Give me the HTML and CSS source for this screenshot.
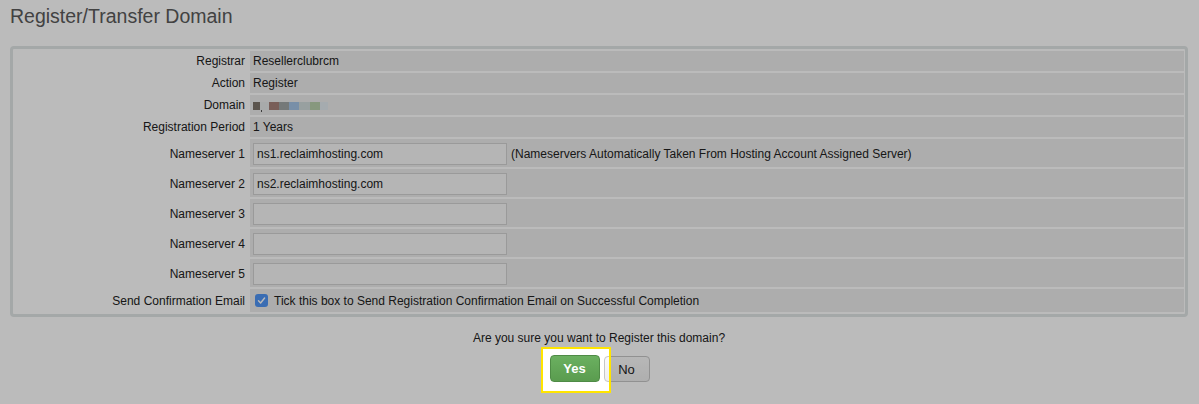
FILE: index.html
```html
<!DOCTYPE html>
<html lang="en">
<head>
<meta charset="utf-8">
<title>Register/Transfer Domain</title>
<link rel="stylesheet" href="styles.css">
</head>
<body>
<div class="page">
  <h1 class="title">Register/Transfer Domain</h1>
  <div class="box">
    <div class="grid">
      <div class="label row-text">Registrar</div>
      <div class="value row-text">Resellerclubrcm</div>

      <div class="label row-text">Action</div>
      <div class="value row-text">Register</div>

      <div class="label row-text">Domain</div>
      <div class="value row-text">
        <span class="blur">
          <span class="px b1"></span><span class="px b2"><span class="dot"></span></span><span class="px b3"></span><span class="px b4"></span><span class="px b5"></span><span class="px b6"></span><span class="px b7"></span><span class="px b8"></span>
        </span>
      </div>

      <div class="label row-text">Registration Period</div>
      <div class="value row-text">1 Years</div>

      <div class="label row-ns">Nameserver 1</div>
      <div class="value row-ns"><input class="field" type="text" value="ns1.reclaimhosting.com"><span class="note">(Nameservers Automatically Taken From Hosting Account Assigned Server)</span></div>

      <div class="label row-ns">Nameserver 2</div>
      <div class="value row-ns"><input class="field" type="text" value="ns2.reclaimhosting.com"></div>

      <div class="label row-ns">Nameserver 3</div>
      <div class="value row-ns"><input class="field" type="text" value=""></div>

      <div class="label row-ns">Nameserver 4</div>
      <div class="value row-ns"><input class="field" type="text" value=""></div>

      <div class="label row-ns">Nameserver 5</div>
      <div class="value row-ns"><input class="field" type="text" value=""></div>

      <div class="label row-send">Send Confirmation Email</div>
      <div class="value row-send">
        <span class="check"><svg width="13" height="13" viewBox="0 0 13 13"><polyline points="3.5,6.8 5.6,9 9.6,4" fill="none" stroke="#fff" stroke-width="1.4" stroke-linecap="round" stroke-linejoin="round"/></svg></span>
        <span class="send-text">Tick this box to Send Registration Confirmation Email on Successful Completion</span>
      </div>
    </div>
  </div>

  <p class="confirm">Are you sure you want to Register this domain?</p>
  <div class="actions">
    <span class="yes-wrap">
      <button class="btn yes">Yes</button>
      <span class="highlight"></span>
    </span>
    <button class="btn no">No</button>
  </div>
</div>
</body>
</html>
```

FILE: styles.css
```css
html, body {
  margin: 0;
  padding: 0;
  background: #ffffff;
}

html {
  height: 100%;
}

body {
  min-height: 100%;
  font-family: "Liberation Sans", Arial, sans-serif;
  font-size: 12px;
  color: #222;
}

.page {
  padding: 0 11px 0 10px;
  min-height: 404px;
  box-sizing: border-box;
}

.title {
  margin: 0;
  padding-top: 4px;
  height: 46px;
  box-sizing: border-box;
  font-size: 19.5px;
  line-height: 24px;
  font-weight: normal;
  color: #5a5a5a;
}

.box {
  border: 3px solid #e0e5e5;
  border-radius: 4px;
  padding: 2px 1px 2px 2px;
  background: #ffffff;
}

.grid {
  display: grid;
  grid-template-columns: 235px 1fr;
  row-gap: 2px;
}

.label {
  text-align: right;
  padding-right: 5px;
  display: flex;
  align-items: center;
  justify-content: flex-end;
}

.value {
  background: #ececec;
  padding-left: 3px;
  display: flex;
  align-items: center;
}

.row-text { height: 20px; }
.row-ns { height: 28px; }
.row-send { height: 23px; }

.row-ns.label, .row-ns.value { padding-top: 2px; box-sizing: border-box; }

.field {
  width: 254px;
  height: 22px;
  box-sizing: border-box;
  border: 1px solid #d2d2d2;
  background: #f7f7f7;
  font-family: "Liberation Sans", Arial, sans-serif;
  font-size: 12px;
  color: #222;
  padding: 0 3px;
  margin: 0;
  outline: none;
}

.note {
  margin-left: 4px;
}

.blur {
  display: flex;
  height: 8px;
  margin-top: 1px;
}

.px {
  display: block;
  width: 10px;
  height: 8px;
  position: relative;
}
.b1 { width: 7px; background: #7c7369; }
.b2 { width: 9px; background: #e5e8e8; }
.b3 { background: #a68078; }
.b4 { background: #a0a6a6; }
.b5 { background: #a4c4e5; }
.b6 { width: 11px; background: #d0dada; }
.b7 { background: #b9cfac; }
.b8 { width: 8px; background: #e2e9ef; }

.dot {
  position: absolute;
  left: 1px;
  top: 8px;
  width: 1px;
  height: 2px;
  background: #555;
}

.check {
  width: 13px;
  height: 13px;
  border-radius: 3px;
  background: #4f95f5;
  display: inline-flex;
  margin-left: 2px;
  margin-right: 6px;
}

.check svg { display: block; }

.confirm {
  margin: 13px 0 0;
  text-align: center;
  line-height: 16px;
}

.actions {
  display: flex;
  justify-content: center;
  align-items: flex-start;
  gap: 4px;
  margin-top: 9px;
  padding-left: 1px;
}

.yes-wrap {
  position: relative;
  display: inline-flex;
}

.btn {
  font-family: "Liberation Sans", Arial, sans-serif;
  font-size: 13px;
  height: 27px;
  border-radius: 4px;
  padding: 0;
  margin: 0;
  cursor: pointer;
}

.yes {
  width: 50px;
  color: #fff;
  font-weight: bold;
  background: linear-gradient(#6bb060, #5a9c4f);
  border: 1px solid #4f8b46;
}

.no {
  width: 46px;
  margin-top: 1px;
  height: 26px;
  color: #222;
  background: linear-gradient(#fafafa, #efefef);
  border: 1px solid #c6c6c6;
}

.highlight {
  position: absolute;
  left: -9px;
  top: -8px;
  right: -11px;
  bottom: -11px;
  border: 2px solid #ffe500;
  box-shadow: 0 0 0 3000px rgba(0, 0, 0, 0.267);
  pointer-events: none;
  z-index: 10;
}
```
